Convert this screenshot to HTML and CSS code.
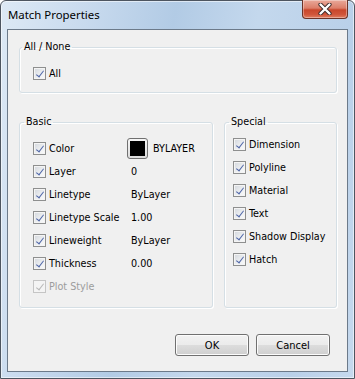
FILE: index.html
```html
<!DOCTYPE html>
<html lang="en">
<head>
    <meta charset="UTF-8">
    <meta name="viewport" content="width=device-width, initial-scale=1.0">
    <title>Match Properties</title>
    <link rel="stylesheet" href="styles.css">
</head>
<body>
    <div class="window">
        <div class="titlebar">
            <span class="title">Match Properties</span>
            <button class="close" title="Close">
                <svg width="14" height="12" viewBox="0 0 14 12">
                    <path d="M2.5 1.5 L11.5 10.5 M11.5 1.5 L2.5 10.5" stroke="#3b2a2a" stroke-width="4.2" stroke-linecap="round"/>
                    <path d="M2.5 1.5 L11.5 10.5 M11.5 1.5 L2.5 10.5" stroke="#ffffff" stroke-width="2.4" stroke-linecap="round"/>
                </svg>
            </button>
        </div>

        <div class="client">
            <!-- All / None -->
            <fieldset class="group group-all">
                <legend>All / None</legend>
                <label class="check"><span class="box"></span>All</label>
            </fieldset>

            <div class="columns">
                <fieldset class="group basic">
                    <legend>Basic</legend>
                    <div class="row">
                        <label class="check"><span class="box"></span>Color</label>
                        <span class="value color-value"><span class="swatch"><span class="swatch-fill"></span></span>BYLAYER</span>
                    </div>
                    <div class="row">
                        <label class="check"><span class="box"></span>Layer</label>
                        <span class="value">0</span>
                    </div>
                    <div class="row">
                        <label class="check"><span class="box"></span>Linetype</label>
                        <span class="value">ByLayer</span>
                    </div>
                    <div class="row">
                        <label class="check"><span class="box"></span>Linetype Scale</label>
                        <span class="value">1.00</span>
                    </div>
                    <div class="row">
                        <label class="check"><span class="box"></span>Lineweight</label>
                        <span class="value">ByLayer</span>
                    </div>
                    <div class="row">
                        <label class="check"><span class="box"></span>Thickness</label>
                        <span class="value">0.00</span>
                    </div>
                    <div class="row">
                        <label class="check disabled"><span class="box"></span>Plot Style</label>
                    </div>
                </fieldset>

                <fieldset class="group special">
                    <legend>Special</legend>
                    <div class="row"><label class="check"><span class="box"></span>Dimension</label></div>
                    <div class="row"><label class="check"><span class="box"></span>Polyline</label></div>
                    <div class="row"><label class="check"><span class="box"></span>Material</label></div>
                    <div class="row"><label class="check"><span class="box"></span>Text</label></div>
                    <div class="row"><label class="check"><span class="box"></span>Shadow Display</label></div>
                    <div class="row"><label class="check"><span class="box"></span>Hatch</label></div>
                </fieldset>
            </div>

            <div class="buttons">
                <button class="btn">OK</button>
                <button class="btn">Cancel</button>
            </div>
        </div>
    </div>
</body>
</html>
```

FILE: styles.css
```css
/* Windows 7 style dialog */
* {
    box-sizing: border-box;
}

body {
    margin: 0;
    background-color: #ffffff;
    font-family: "DejaVu Sans Condensed", "DejaVu Sans", sans-serif;
    font-size: 10.7px;
    color: #000;
}

.window {
    width: 355px;
    height: 379px;
    display: flex;
    flex-direction: column;
    border: 1px solid #4d5560;
    border-radius: 6px 6px 0 0;
    background: linear-gradient(100deg, #dde9f5 0%, #cbdcef 18%, #b2cbe5 42%, #c4d8ed 62%, #b9d0e9 85%, #c6d9ee 100%);
    box-shadow: inset 0 0 0 1px rgba(255, 255, 255, 0.55);
}

.titlebar {
    height: 28px;
    display: flex;
    justify-content: space-between;
    align-items: flex-start;
    padding-left: 7px;
    padding-right: 6px;
}

.title {
    font-family: "Noto Sans", sans-serif;
    font-size: 11.4px;
    line-height: 14px;
    margin-top: 7px;
    color: #000;
}

.close {
    width: 46px;
    height: 19px;
    margin-top: -1px;
    padding: 0;
    border: 1px solid #6b3328;
    border-top: none;
    border-radius: 0 0 4px 4px;
    background: linear-gradient(#e9a99a 0%, #dc7e69 45%, #c9472c 55%, #d0553a 80%, #e07d60 100%);
    box-shadow: inset 0 0 0 1px rgba(255, 255, 255, 0.35);
    display: flex;
    align-items: center;
    justify-content: center;
}

.client {
    flex: 1;
    margin: 0 6px 6px 6px;
    border: 1px solid #6c7a8a;
    background-color: #f0f0f0;
    display: flex;
    flex-direction: column;
    padding: 10px 10px 15px 11px;
}

/* group boxes */
.group {
    margin: 0;
    min-width: 0;
    border: 1px solid #d5dfe5;
    border-radius: 3px;
    padding: 0 0 0 2px;
    box-shadow: 1px 1px 0 #ffffff, inset 1px 1px 0 #ffffff;
}

.group legend {
    padding: 0 2px;
    line-height: 14px;
}

.group-all {
    padding-bottom: 7px;
}

.group-all .check {
    margin: 8px 0 0 11px;
    height: 23px;
}

.columns {
    display: grid;
    grid-template-columns: 194px 113px;
    column-gap: 11px;
    margin-top: 22px;
}

.basic legend,
.special legend {
    margin-left: 2px;
}

.basic {
    padding-top: 8px;
    padding-bottom: 9px;
}

.special {
    padding-top: 4px;
}

.row {
    height: 23px;
    display: grid;
    grid-template-columns: 94px 1fr;
    align-items: center;
    padding-left: 11px;
}

.special .row {
    padding-left: 6px;
}

/* check boxes */
.check {
    display: flex;
    align-items: center;
    gap: 3px;
    white-space: nowrap;
}

.box {
    width: 13px;
    height: 13px;
    border: 1px solid #8e8f8f;
    background: linear-gradient(135deg, #d2d6dc 0%, #eef0f2 60%, #fbfbfb 100%);
    box-shadow: inset 0 0 0 1px #f4f4f4;
    display: grid;
    place-items: center;
}

.box::after {
    content: "";
    width: 3px;
    height: 7px;
    margin-top: -2px;
    border-right: 1.6px solid #5066a8;
    border-bottom: 1.6px solid #5066a8;
    transform: rotate(38deg);
}

.check.disabled {
    color: #9c9c9c;
}

.check.disabled .box {
    border-color: #c5c5c5;
    background: #f4f4f4;
}

.check.disabled .box::after {
    border-color: #b8b8b8;
}

.value {
    padding-left: 4px;
    white-space: nowrap;
}

.color-value {
    padding-left: 0;
    display: flex;
    align-items: center;
    gap: 5px;
}

.swatch {
    width: 21px;
    height: 21px;
    border: 1px solid #707070;
    border-radius: 3px;
    background: linear-gradient(#f6f6f6, #dcdcdc);
    display: grid;
    place-items: center;
}

.swatch-fill {
    width: 15px;
    height: 15px;
    background-color: #000;
}

/* buttons */
.buttons {
    margin-top: auto;
    display: flex;
    justify-content: flex-end;
    gap: 7px;
    padding-right: 7px;
}

.btn {
    width: 74px;
    height: 22px;
    padding: 0;
    font-family: inherit;
    font-size: 11px;
    color: #000;
    border: 1px solid #707070;
    border-radius: 3px;
    background: linear-gradient(#f2f2f2 0%, #ebebeb 50%, #dddddd 50%, #cfcfcf 100%);
    box-shadow: inset 0 0 0 1px #fcfcfc;
}
```
